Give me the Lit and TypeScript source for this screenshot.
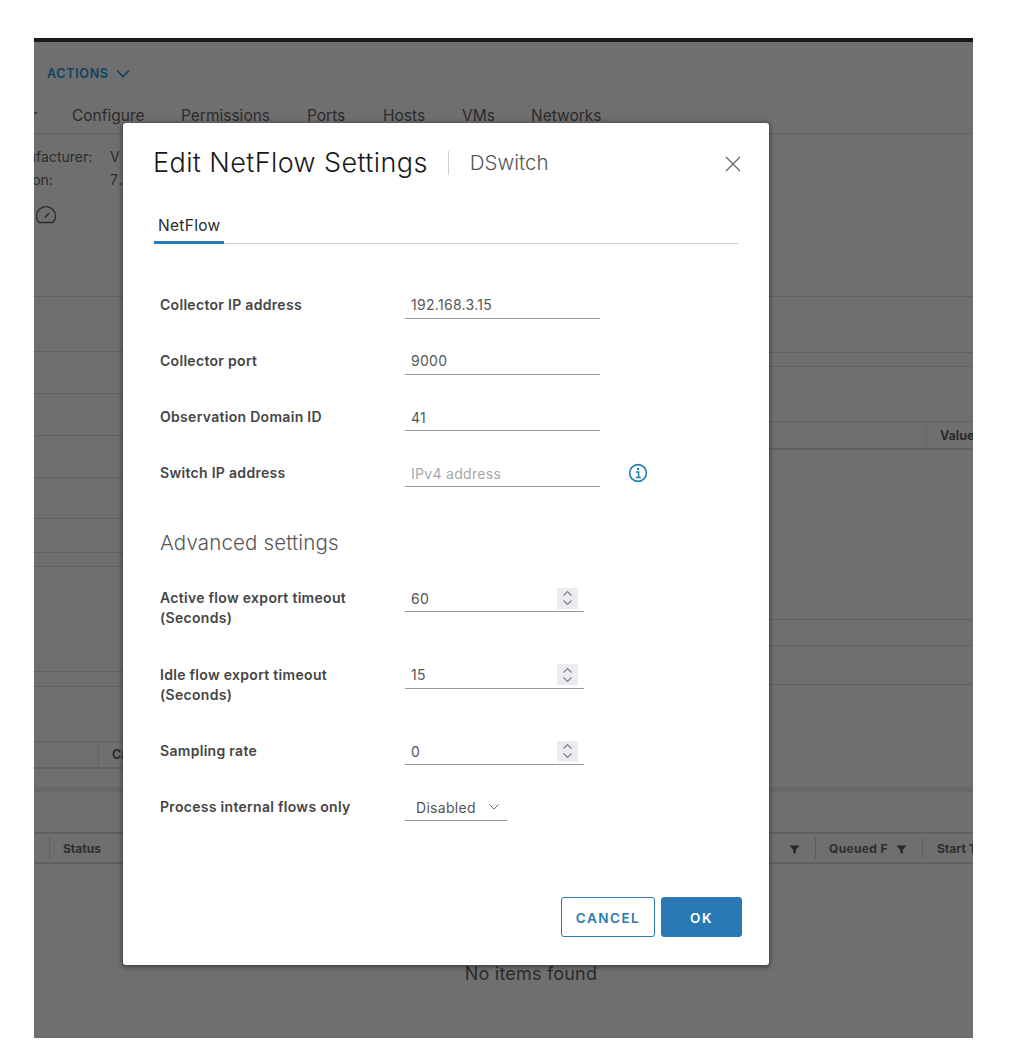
import { LitElement, html, css } from "lit";
import { customElement } from "lit/decorators.js";

const leftCells = [55, 42, 42, 42, 41, 34, 14, 105, 15, 55];
const rightCells = [56, 14, 55];
const rightLower = [170, 26, 39];

const textFields = [
  { label: "Collector IP address", value: "192.168.3.15" },
  { label: "Collector port", value: "9000" },
  { label: "Observation Domain ID", value: "41" },
];

const numberFields = [
  { label: "Active flow export timeout (Seconds)", value: "60", tall: true },
  { label: "Idle flow export timeout (Seconds)", value: "15", tall: true },
  { label: "Sampling rate", value: "0", tall: false },
];

const filterIcon = html`<svg class="filter" viewBox="0 0 12 12"><path d="M0.5 1.5h11L7.4 6.4v4.6L4.6 9.4V6.4z" fill="#2a2a2a"></path></svg>`;

@customElement("app-root")
export class AppRoot extends LitElement {
  static styles = css`
    :host {
      display: block;
      position: relative;
      width: 1016px;
      height: 1064px;
      background: #fff;
      font-family: "Inter", "Liberation Sans", sans-serif;
      color: #2b2b2b;
      overflow: hidden;
    }

    .screen {
      margin: 38px 0 0 34px;
      width: 939px;
      height: 1000px;
      background: #6f6f6f;
      border-top: 4px solid #141c22;
      box-sizing: border-box;
      overflow: hidden;
    }

    .actions {
      display: flex;
      align-items: center;
      gap: 7px;
      height: 20px;
      margin: 21px 0 0 13px;
      font-size: 12.5px;
      font-weight: 600;
      letter-spacing: 0.7px;
      color: #0b4362;
    }

    .actions svg {
      width: 14px;
      height: 9px;
    }

    .bg-tabs {
      display: flex;
      height: 51px;
      box-sizing: border-box;
      padding-top: 22px;
      border-bottom: 1px solid #616161;
      font-size: 15.5px;
      line-height: 22px;
      white-space: nowrap;
    }

    .bg-tabs .t0 { margin-left: -53px; width: 53px; text-align: right; }
    .bg-tabs .t1 { margin-left: 38px; width: 109px; }
    .bg-tabs .t2 { width: 126px; }
    .bg-tabs .t3 { width: 76px; }
    .bg-tabs .t4 { width: 79px; }
    .bg-tabs .t5 { width: 69px; }

    .info {
      height: 163px;
      box-sizing: border-box;
      padding-top: 11px;
      border-bottom: 1px solid #616161;
      font-size: 14px;
      line-height: 23px;
    }

    .info-row {
      display: flex;
    }

    .info-key {
      width: 94px;
      margin-left: -35px;
      white-space: nowrap;
      flex: none;
    }

    .info-val {
      margin-left: 17px;
      letter-spacing: 2.5px;
    }

    .gauge {
      display: block;
      width: 24px;
      height: 20px;
      margin: 13px 0 0 0;
    }

    .columns {
      display: grid;
      grid-template-columns: 470px 1fr;
      height: 490px;
    }

    .col {
      display: flex;
      flex-direction: column;
    }

    .cell {
      box-sizing: border-box;
      border-bottom: 1px solid #616161;
      flex: none;
    }

    .table-head {
      display: flex;
      align-items: center;
      box-sizing: border-box;
      height: 28px;
      border-bottom: 2px solid #616161;
      font-size: 12.5px;
      font-weight: 700;
      flex: none;
    }

    .table-head.left {
      height: 27px;
    }

    .table-head.left .sep {
      margin-left: 64px;
    }

    .table-head.right {
      justify-content: flex-end;
    }

    .sep {
      width: 1px;
      height: 100%;
      background: #656565;
      flex: none;
    }

    .table-head .sep + span {
      margin-left: 13px;
    }

    .table-head.right .val {
      width: 33px;
      overflow: hidden;
    }

    .band {
      height: 5px;
      background: #676767;
    }

    .grid-head {
      display: flex;
      justify-content: space-between;
      align-items: center;
      box-sizing: border-box;
      height: 32px;
      margin-top: 40px;
      border-top: 2px solid #5f5f5f;
      border-bottom: 2px solid #5f5f5f;
      font-size: 12px;
      font-weight: 700;
      color: #2d2d2d;
      white-space: nowrap;
    }

    .grid-head .sep {
      height: 22px;
      background: #5f5f5f;
    }

    .grid-group {
      display: flex;
      align-items: center;
    }

    .grid-group.left .sep { margin-left: 15px; }
    .grid-group.left span:last-child { margin-left: 13px; }

    .filter {
      display: block;
      width: 11px;
      height: 11px;
      margin-top: 3px;
      flex: none;
    }

    .grid-group.right .f1 { margin-right: 15px; }
    .grid-group.right .q { margin-left: 13px; width: 59px; letter-spacing: 0.35px; flex: none; }
    .grid-group.right .f2 { margin-left: 8px; margin-right: 15px; }
    .grid-group.right .s { margin-left: 14px; width: 36px; overflow: hidden; }

    .empty {
      margin-top: 100px;
      padding-left: 55px;
      text-align: center;
      font-size: 18px;
      line-height: 20px;
      letter-spacing: 0.2px;
    }

    .modal {
      position: absolute;
      left: 123px;
      top: 123px;
      width: 646px;
      height: 842px;
      box-sizing: border-box;
      display: flex;
      flex-direction: column;
      background: #fff;
      border-radius: 3px;
      box-shadow: 0 1px 5px 1px rgba(0, 0, 0, 0.45);
      color: #565656;
    }

    .head {
      display: flex;
      align-items: center;
      padding: 24px 28px 0 30px;
      height: 56px;
      box-sizing: border-box;
    }

    .title {
      font-size: 27px;
      line-height: 32px;
      font-weight: 300;
      letter-spacing: 0.4px;
      color: #1a1a1a;
      white-space: nowrap;
    }

    .head-sep {
      width: 1px;
      height: 24px;
      margin: 0 21px 0 20px;
      background: #cfcfcf;
    }

    .subject {
      font-size: 20.5px;
      line-height: 32px;
      font-weight: 300;
      color: #565656;
    }

    .close {
      width: 16px;
      height: 16px;
      margin: 2px 0 0 auto;
    }

    .tabbar {
      margin: 30px 0 0 31px;
      width: 584px;
      height: 35px;
      box-sizing: border-box;
      border-bottom: 1px solid #cccccc;
    }

    .tab {
      display: block;
      width: 70px;
      height: 35px;
      box-sizing: border-box;
      padding: 7px 0 0 4px;
      border-bottom: 3px solid #2a79b5;
      font-size: 15.5px;
      line-height: 20px;
      letter-spacing: 0.3px;
      color: #2b2b2b;
    }

    .form {
      display: flex;
      flex-direction: column;
      padding-left: 37px;
      margin-top: 46.5px;
    }

    .group {
      display: flex;
      flex-direction: column;
      gap: 28.33px;
    }

    .group.numbers {
      gap: 28px;
      margin-top: 25px;
    }

    .row {
      display: grid;
      grid-template-columns: 245px auto;
      align-items: start;
    }

    .row.tall {
      height: 48.5px;
    }

    .label {
      font-size: 14px;
      line-height: 20px;
      font-weight: 600;
      letter-spacing: 0.3px;
      color: #454545;
      padding-top: 4px;
      max-width: 205px;
    }

    .field {
      display: flex;
      align-items: center;
      justify-content: space-between;
      box-sizing: border-box;
      height: 28px;
      padding: 1px 6px 0 6px;
      border-bottom: 1px solid #9a9a9a;
      font-size: 14px;
      letter-spacing: 0.3px;
      color: #565656;
    }

    .field.text { width: 195px; }
    .field.number { width: 179px; }
    .field.select {
      width: 102px;
      padding: 1px 8px 0 11px;
    }

    .with-info {
      display: flex;
      align-items: center;
      gap: 28px;
    }

    .placeholder {
      color: #a8a8a8;
    }

    .info-icon {
      width: 20px;
      height: 20px;
    }

    .spinner {
      display: flex;
      align-items: center;
      justify-content: center;
      width: 21px;
      height: 21px;
      background: #ececf0;
    }

    .spinner svg {
      width: 11px;
      height: 16px;
    }

    .chev {
      width: 10px;
      height: 6px;
    }

    .advanced {
      margin-top: 40px;
      font-size: 20.5px;
      line-height: 32px;
      font-weight: 300;
      letter-spacing: 0.15px;
      color: #565656;
    }

    .footer {
      display: flex;
      justify-content: flex-end;
      gap: 6px;
      margin-top: auto;
      padding: 0 27px 28px 0;
    }

    .btn {
      display: flex;
      align-items: center;
      justify-content: center;
      box-sizing: border-box;
      height: 40px;
      padding-top: 1px;
      border-radius: 3px;
      border: 1px solid #2a79b5;
      font-size: 13.5px;
      font-weight: 600;
      letter-spacing: 1.5px;
    }

    .btn.cancel {
      width: 94px;
      background: #fff;
      color: #2a79b5;
    }

    .btn.ok {
      width: 81px;
      background: #2a79b5;
      color: #fff;
    }
  `;

  private renderBackground() {
    return html`
      <div class="screen">
        <div class="actions">
          ACTIONS
          <svg viewBox="0 0 14 9"><path d="M1 1.5l6 6 6-6" fill="none" stroke="#0b4362" stroke-width="1.6"></path></svg>
        </div>
        <div class="bg-tabs">
          <span class="t0">Monitor</span>
          <span class="t1">Configure</span>
          <span class="t2">Permissions</span>
          <span class="t3">Ports</span>
          <span class="t4">Hosts</span>
          <span class="t5">VMs</span>
          <span>Networks</span>
        </div>
        <div class="info">
          <div class="info-row"><span class="info-key">Manufacturer:</span><span class="info-val">VMware</span></div>
          <div class="info-row"><span class="info-key">Version:</span><span class="info-val">7.0</span></div>
          <svg class="gauge" viewBox="0 0 24 20">
            <path d="M5 18.5a9.5 9.5 0 1 1 14 0z" fill="none" stroke="#2b2b2b" stroke-width="1.3" stroke-linejoin="round"></path>
            <path d="M10.8 13.6l4.2-4.4" stroke="#2b2b2b" stroke-width="1.5"></path>
          </svg>
        </div>
        <div class="columns">
          <div class="col">
            ${leftCells.map((h) => html`<div class="cell" style="height:${h}px"></div>`)}
            <div class="table-head left"><span class="sep"></span><span>Ca</span></div>
          </div>
          <div class="col">
            ${rightCells.map((h) => html`<div class="cell" style="height:${h}px"></div>`)}
            <div class="table-head right"><span class="sep"></span><span class="val">Value</span></div>
            ${rightLower.map((h) => html`<div class="cell" style="height:${h}px"></div>`)}
          </div>
        </div>
        <div class="band"></div>
        <div class="grid-head">
          <div class="grid-group left"><span class="sep"></span><span>Status</span></div>
          <div class="grid-group right">
            <span class="f1">${filterIcon}</span>
            <span class="sep"></span>
            <span class="q">Queued F</span>
            <span class="f2">${filterIcon}</span>
            <span class="sep"></span>
            <span class="s">Start Time</span>
          </div>
        </div>
        <div class="empty">No items found</div>
      </div>
    `;
  }

  private renderSpinner() {
    return html`<span class="spinner">
      <svg viewBox="0 0 11 16">
        <path d="M1.5 5.5l4-4 4 4M1.5 10.5l4 4 4-4" fill="none" stroke="#7d7d85" stroke-width="1.2"></path>
      </svg>
    </span>`;
  }

  render() {
    return html`
      ${this.renderBackground()}
      <div class="modal">
        <div class="head">
          <span class="title">Edit NetFlow Settings</span>
          <span class="head-sep"></span>
          <span class="subject">DSwitch</span>
          <svg class="close" viewBox="0 0 16 16">
            <path d="M1 1l14 14M15 1L1 15" stroke="#666" stroke-width="1.3"></path>
          </svg>
        </div>
        <div class="tabbar"><span class="tab">NetFlow</span></div>
        <div class="form">
          <div class="group">
            ${textFields.map(
              (f) => html`<div class="row">
                <span class="label">${f.label}</span>
                <div class="field text">${f.value}</div>
              </div>`
            )}
            <div class="row">
              <span class="label">Switch IP address</span>
              <div class="with-info">
                <div class="field text"><span class="placeholder">IPv4 address</span></div>
                <svg class="info-icon" viewBox="0 0 20 20">
                  <circle cx="10" cy="10" r="8.4" fill="none" stroke="#1f7eab" stroke-width="1.6"></circle>
                  <circle cx="10" cy="6" r="1.2" fill="#1f7eab"></circle>
                  <path d="M8 9h2.6v5M7.8 14.4h5" fill="none" stroke="#1f7eab" stroke-width="1.5"></path>
                </svg>
              </div>
            </div>
          </div>
          <div class="advanced">Advanced settings</div>
          <div class="group numbers">
            ${numberFields.map(
              (f) => html`<div class="row ${f.tall ? "tall" : ""}">
                <span class="label">${f.label}</span>
                <div class="field number"><span>${f.value}</span>${this.renderSpinner()}</div>
              </div>`
            )}
            <div class="row">
              <span class="label">Process internal flows only</span>
              <div class="field select">
                <span>Disabled</span>
                <svg class="chev" viewBox="0 0 10 6"><path d="M0.5 0.5l4.5 4.5 4.5-4.5" fill="none" stroke="#666" stroke-width="1"></path></svg>
              </div>
            </div>
          </div>
        </div>
        <div class="footer">
          <div class="btn cancel">CANCEL</div>
          <div class="btn ok">OK</div>
        </div>
      </div>
    `;
  }
}
